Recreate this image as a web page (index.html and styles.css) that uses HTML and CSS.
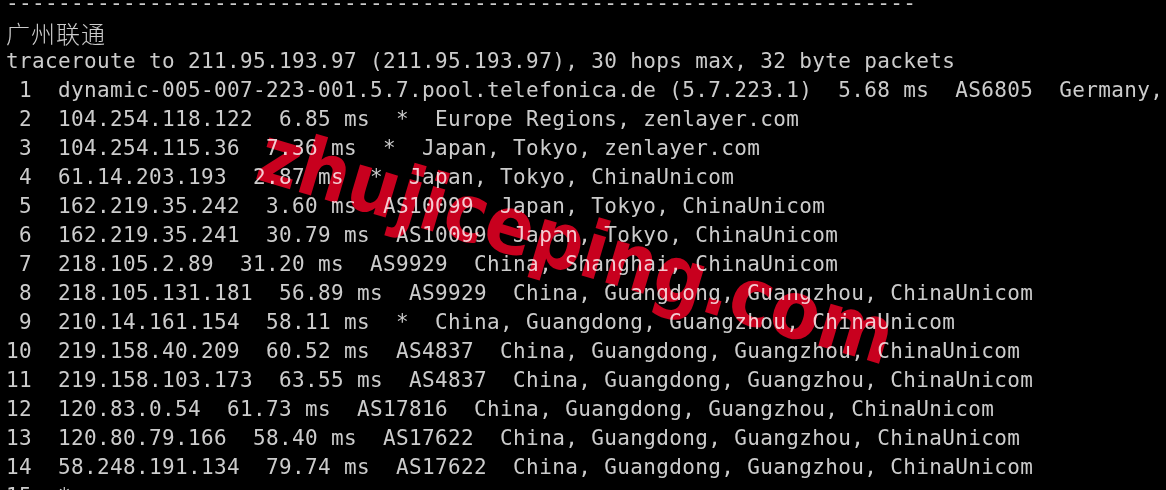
FILE: index.html
```html
<!DOCTYPE html>
<html lang="zh">
<head>
<meta charset="utf-8">
<title>traceroute</title>
<link rel="stylesheet" href="styles.css">
</head>
<body>
<div class="screen">
  <div class="watermark">zhujiceping.com</div>
  <pre class="term"><div class="line">----------------------------------------------------------------------</div><div class="line cjk">广州联通</div><div class="line">traceroute to 211.95.193.97 (211.95.193.97), 30 hops max, 32 byte packets</div><div class="line"> 1  dynamic-005-007-223-001.5.7.pool.telefonica.de (5.7.223.1)  5.68 ms  AS6805  Germany,</div><div class="line"> 2  104.254.118.122  6.85 ms  *  Europe Regions, zenlayer.com</div><div class="line"> 3  104.254.115.36  7.36 ms  *  Japan, Tokyo, zenlayer.com</div><div class="line"> 4  61.14.203.193  2.87 ms  *  Japan, Tokyo, ChinaUnicom</div><div class="line"> 5  162.219.35.242  3.60 ms  AS10099  Japan, Tokyo, ChinaUnicom</div><div class="line"> 6  162.219.35.241  30.79 ms  AS10099  Japan, Tokyo, ChinaUnicom</div><div class="line"> 7  218.105.2.89  31.20 ms  AS9929  China, Shanghai, ChinaUnicom</div><div class="line"> 8  218.105.131.181  56.89 ms  AS9929  China, Guangdong, Guangzhou, ChinaUnicom</div><div class="line"> 9  210.14.161.154  58.11 ms  *  China, Guangdong, Guangzhou, ChinaUnicom</div><div class="line">10  219.158.40.209  60.52 ms  AS4837  China, Guangdong, Guangzhou, ChinaUnicom</div><div class="line">11  219.158.103.173  63.55 ms  AS4837  China, Guangdong, Guangzhou, ChinaUnicom</div><div class="line">12  120.83.0.54  61.73 ms  AS17816  China, Guangdong, Guangzhou, ChinaUnicom</div><div class="line">13  120.80.79.166  58.40 ms  AS17622  China, Guangdong, Guangzhou, ChinaUnicom</div><div class="line">14  58.248.191.134  79.74 ms  AS17622  China, Guangdong, Guangzhou, ChinaUnicom</div><div class="line">15  *</div></pre>
</div>
</body>
</html>
```
FILE: styles.css
```css
html, body {
  margin: 0;
  padding: 0;
  background: #000;
  width: 1166px;
  height: 490px;
  overflow: hidden;
}

.screen {
  position: relative;
  width: 1166px;
  height: 490px;
  overflow: hidden;
  background: #000;
}

.watermark {
  position: absolute;
  left: 272px;
  top: 114px;
  z-index: 0;
  font-family: "DejaVu Sans Condensed", "DejaVu Sans", sans-serif;
  font-weight: bold;
  font-size: 80px;
  line-height: 1;
  color: #c8001e;
  white-space: nowrap;
  transform-origin: 0 0;
  transform: rotate(16.5deg);
}

.term {
  position: relative;
  z-index: 1;
  mix-blend-mode: screen;
  margin: -11px 0 0 0;
  padding: 0 0 0 6px;
  font-family: "DejaVu Sans Mono", monospace;
  font-size: 21px;
  letter-spacing: 0.36px;
  line-height: 29px;
  color: #cccccc;
  white-space: pre;
}

.line {
  height: 29px;
}

.cjk {
  font-family: "Noto Sans CJK SC", sans-serif;
  font-weight: 300;
  font-size: 24px;
  letter-spacing: 1px;
}
```
